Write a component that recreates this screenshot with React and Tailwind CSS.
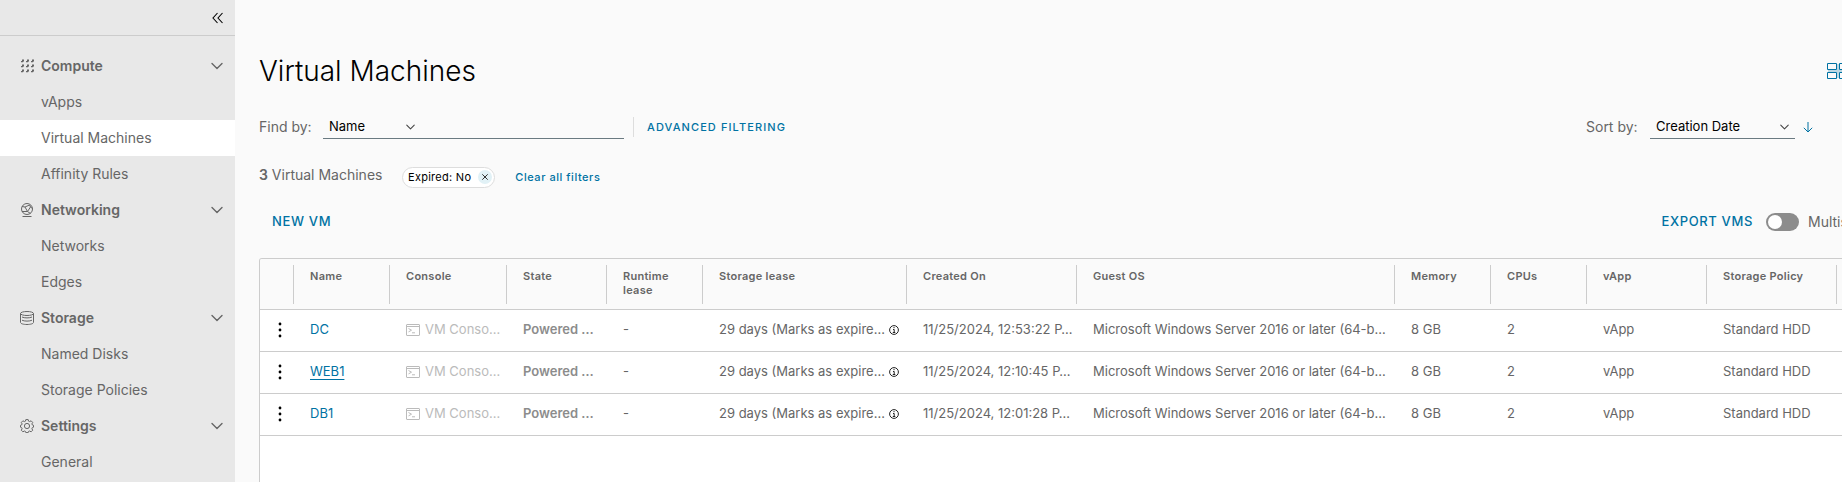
import React, { useState } from "react";

const navGroups = [
  { title: "Compute", icon: "grid", items: ["vApps", "Virtual Machines", "Affinity Rules"] },
  { title: "Networking", icon: "network", items: ["Networks", "Edges"] },
  { title: "Storage", icon: "storage", items: ["Named Disks", "Storage Policies"] },
  { title: "Settings", icon: "cog", items: ["General"] },
];

const columns = [
  { label: "Name", width: "w-[96px]" },
  { label: "Console", width: "w-[117px]" },
  { label: "State", width: "w-[100px]" },
  { label: "Runtime lease", width: "w-[96px]" },
  { label: "Storage lease", width: "w-[204px]" },
  { label: "Created On", width: "w-[170px]" },
  { label: "Guest OS", width: "w-[318px]" },
  { label: "Memory", width: "w-[96px]" },
  { label: "CPUs", width: "w-[96px]" },
  { label: "vApp", width: "w-[120px]" },
  { label: "Storage Policy", width: "w-[130px]" },
];

const machines = [
  { name: "DC", created: "11/25/2024, 12:53:22 P…" },
  { name: "WEB1", created: "11/25/2024, 12:10:45 P…" },
  { name: "DB1", created: "11/25/2024, 12:01:28 P…" },
];

const NavIcon = ({ name }) => {
  if (name === "grid") {
    return (
      <svg width="14" height="14" viewBox="0 0 14 14" fill="currentColor">
        {[0, 5, 10].map((y) =>
          [1, 6, 11].map((x) => <path key={`${x}-${y}`} d={`M${x + 1} ${y + 0.5}h2v1.500l-1 1.200h-2v-1.200h1z`} />)
        )}
      </svg>
    );
  }
  if (name === "network") {
    return (
      <svg width="14" height="14" viewBox="0 0 14 14" fill="none" stroke="currentColor" strokeWidth="1">
        <circle cx="7" cy="6" r="5.500" />
        <path d="M2 3.500 5 4l4.500-2M5 4l2.500 4.500L10.500 4 9.500 2M2 8.500l5.500 0 3 2M10.500 4l2 1.500" />
        <path d="M2.500 13.500h9" />
      </svg>
    );
  }
  if (name === "storage") {
    return (
      <svg width="14" height="14" viewBox="0 0 14 14" fill="none" stroke="currentColor" strokeWidth="1">
        <ellipse cx="7" cy="2.500" rx="6.500" ry="2" />
        <path d="M.5 2.500v9c0 1.100 2.900 2 6.500 2s6.500-.9 6.500-2v-9" />
        <path d="M2 6c1.200.6 3 .9 5 .9s3.800-.3 5-.9M2 9.200c1.200.6 3 .9 5 .9s3.800-.3 5-.9" />
      </svg>
    );
  }
  return (
    <svg width="14" height="14" viewBox="0 0 14 14" fill="none" stroke="currentColor" strokeWidth="1" strokeLinejoin="round">
      <circle cx="7" cy="7" r="2.600" />
      <path d="M5.800.6h2.400l.4 1.600 1 .4 1.500-.8 1.600 1.600-.8 1.500.4 1 1.200.4v1.900l-1.200.5-.4 1 .8 1.500-1.600 1.600-1.500-.8-1 .4-.4 1.200H5.800l-.4-1.200-1-.4-1.500.8-1.600-1.600.8-1.500-.4-1L.5 8.200V6.300l1.200-.4.4-1-.8-1.500 1.600-1.600 1.500.8 1-.4z" />
    </svg>
  );
};

const Chevron = ({ className }) => (
  <svg className={className} viewBox="0 0 12 8" fill="none" stroke="currentColor" strokeWidth="1.400" strokeLinecap="round" strokeLinejoin="round">
    <path d="M1 1.500 6 6.500l5-5" />
  </svg>
);

const Sidebar = () => (
  <aside className="w-[235px] shrink-0 bg-[#e8e8e8] text-[#666]">
    <div className="flex h-9 items-center justify-end border-b border-[#ccc] pr-3">
      <button type="button" aria-label="Collapse menu" className="text-black">
        <svg width="11" height="12" viewBox="0 0 11 12" fill="none" stroke="currentColor" strokeWidth="1.100">
          <path d="M5.500 1 1 6l4.500 5M10.500 1 6 6l4.500 5" />
        </svg>
      </button>
    </div>
    <nav className="pt-3 text-sm">
      {navGroups.map((group) => (
        <div key={group.title}>
          <button type="button" className="flex h-9 w-full items-center gap-[7px] pr-3 pl-5 font-semibold">
            <NavIcon name={group.icon} />
            <span className="flex-1 text-left">{group.title}</span>
            <Chevron className="h-2 w-3" />
          </button>
          {group.items.map((item) => (
            <a
              key={item}
              href="#"
              className={`flex h-9 items-center pl-[41px] ${item === "Virtual Machines" ? "bg-white" : ""}`}
            >
              {item}
            </a>
          ))}
        </div>
      ))}
    </nav>
  </aside>
);

const Toolbar = () => {
  const [query, setQuery] = useState("");

  return (
    <div className="flex h-6 items-center">
      <label htmlFor="find-by" className="mr-2 w-14 text-sm whitespace-nowrap">
        Find by:
      </label>
      <div className="flex h-6 w-[301px] border-b border-[#6a7a81]">
        <div className="relative flex w-[100px] items-center text-black">
          <select id="find-by" className="w-full appearance-none bg-transparent pl-[6px] text-[13px] outline-none">
            <option>Name</option>
          </select>
          <Chevron className="pointer-events-none absolute right-2 h-[6px] w-[9px] text-[#444]" />
        </div>
        <input
          type="text"
          aria-label="Search value"
          value={query}
          onChange={(e) => setQuery(e.target.value)}
          className="min-w-0 flex-1 bg-transparent px-1 text-[13px] text-black outline-none"
        />
      </div>
      <button type="button" className="ml-[9px] h-5 border-l border-[#ddd] pl-[13px] text-[11px] font-medium tracking-widest text-[#0072a3]">
        ADVANCED FILTERING
      </button>
      <label htmlFor="sort-by" className="mr-2 ml-auto w-14 text-sm whitespace-nowrap">
        Sort by:
      </label>
      <div className="relative flex h-6 w-[145px] items-center border-b border-[#6a7a81] text-black">
        <select id="sort-by" className="w-full appearance-none bg-transparent pl-[6px] text-[13px] outline-none">
          <option>Creation Date</option>
        </select>
        <Chevron className="pointer-events-none absolute right-[6px] h-[6px] w-[9px] text-[#444]" />
      </div>
      <button type="button" aria-label="Sort descending" className="mr-[68px] ml-2 text-[#0072a3]">
        <svg width="10" height="11" viewBox="0 0 10 11" fill="none" stroke="currentColor" strokeWidth="1">
          <path d="M5 0v10M.8 5.800 5 10l4.200-4.200" />
        </svg>
      </button>
    </div>
  );
};

const VmRow = ({ vm }) => (
  <tr className="h-[42px] border-b border-[#ccc] *:pb-[2px]">
    <td className="pl-[5px]">
      <button type="button" aria-label={`Actions for ${vm.name}`} className="flex w-[30px] justify-center text-black">
        <svg width="4" height="16" viewBox="0 0 4 16" fill="currentColor">
          <circle cx="2" cy="2" r="1.400" />
          <circle cx="2" cy="8" r="1.400" />
          <circle cx="2" cy="14" r="1.400" />
        </svg>
      </button>
    </td>
    <td className="pl-[17px]">
      <a href="#" className={`text-[#0072a3] ${vm.name === "WEB1" ? "underline underline-offset-3" : ""}`}>
        {vm.name}
      </a>
    </td>
    <td className="pl-[17px]">
      <button type="button" disabled className="flex items-center gap-[5px] whitespace-nowrap text-[#bbb]">
        <svg className="shrink-0" width="14" height="12" viewBox="0 0 14 12" fill="none" stroke="currentColor" strokeWidth="1">
          <rect x=".5" y=".5" width="13" height="11" rx=".5" />
          <path d="M.5 2.500h13M2.500 4.500l3 1.700-3 1.700M6 8.800h3" />
        </svg>
        VM Conso…
      </button>
    </td>
    <td className="pl-[17px] font-semibold whitespace-nowrap text-[#8c8c8c]">Powered …</td>
    <td className="pl-[17px]">-</td>
    <td className="pl-[17px]">
      <div className="flex items-center gap-1 whitespace-nowrap">
        29 days (Marks as expire…
        <svg className="shrink-0 text-[#222]" width="10" height="10" viewBox="0 0 10 10" fill="none" stroke="currentColor" strokeWidth="1">
          <circle cx="5" cy="5" r="4.400" />
          <path d="M5 2v1.200M4 4.500h1.200v3M3.800 7.500h2.500" />
        </svg>
      </div>
    </td>
    <td className="pl-[17px] whitespace-nowrap">{vm.created}</td>
    <td className="pl-[17px] whitespace-nowrap">Microsoft Windows Server 2016 or later (64-b…</td>
    <td className="pl-[17px]">8 GB</td>
    <td className="pl-[17px]">2</td>
    <td className="pl-[17px]">vApp</td>
    <td className="pl-[17px]">Standard HDD</td>
    <td />
  </tr>
);

const App = () => {
  const [multiselect, setMultiselect] = useState(false);

  return (
    <div className="flex min-h-screen bg-[#fafafa] font-['Inter','Open_Sans',sans-serif] text-[#666]">
      <Sidebar />
      <main className="flex min-w-0 flex-1 overflow-hidden pl-6">
        <div className="flex min-w-[1622px] flex-1 flex-col pt-[53px]">
          <div className="flex h-9 items-center justify-between">
            <h1 className="text-[28px] font-light text-black">Virtual Machines</h1>
            <button type="button" aria-label="Card view" className="mr-8 text-[#0072a3]">
              <svg width="22" height="16" viewBox="0 0 22 16" fill="none" stroke="currentColor" strokeWidth="1">
                <path d="M1 8h20M11 1v14" strokeWidth="2" opacity=".25" />
                <path fill="#fafafa" d="M.5.5h9v6h-9zM12.500.5h9v6h-9zM.5 9.500h9v6h-9zM12.500 9.500h9v6h-9z" />
              </svg>
            </button>
          </div>
          <div className="mt-[26px]">
            <Toolbar />
          </div>
          <div className="mt-[26px] flex h-6 items-center">
            <p className="w-[143px] self-start text-sm whitespace-nowrap">
              <strong className="font-semibold">3</strong> Virtual Machines
            </p>
            <span className="flex h-[21px] items-center gap-[7px] rounded-full border border-[#ddd] bg-white pr-[2px] pl-[5px] text-[11px] tracking-wide text-black">
              Expired: No
              <button type="button" aria-label="Remove filter" className="flex size-[14px] items-center justify-center rounded-full bg-[#e1f1f6]">
                <svg width="6" height="6" viewBox="0 0 6 6" stroke="#333" strokeWidth="1">
                  <path d="M.3.3l5.400 5.400M5.700.3.3 5.700" />
                </svg>
              </button>
            </span>
            <button type="button" className="ml-5 text-[11px] font-medium tracking-wider text-[#0072a3]">
              Clear all filters
            </button>
          </div>
          <div className="mt-[21px] flex h-6 items-center">
            <button type="button" className="ml-[13px] text-[13px] font-medium tracking-wider text-[#0072a3]">
              NEW VM
            </button>
            <button type="button" className="mr-[13px] ml-auto text-[13px] font-medium tracking-wider text-[#0072a3]">
              EXPORT VMS
            </button>
            <label className="flex w-[115px] items-center gap-[9px] text-sm">
              <input
                type="checkbox"
                role="switch"
                checked={multiselect}
                onChange={(e) => setMultiselect(e.target.checked)}
                className="h-[18px] w-[33px] shrink-0 appearance-none rounded-full bg-[#8c8c8c] p-[2px] before:block before:size-[14px] before:rounded-full before:bg-white checked:bg-[#0072a3] checked:before:ml-auto"
              />
              Multiselect
            </label>
          </div>
          <div className="mt-6 flex-1 overflow-hidden rounded-t-[3px] border border-b-0 border-[#ccc] bg-white">
            <table className="w-full table-fixed border-collapse text-[13px]">
              <thead className="bg-[#fafafa] text-left text-[11px] leading-[14px] tracking-wide">
                <tr className="border-b border-[#ccc]">
                  <th className="w-[33px]" aria-label="Actions" />
                  {columns.map((col) => (
                    <th key={col.label} className={`${col.width} px-0 pt-[6px] pb-[5px] font-semibold`}>
                      <div className="h-[39px] border-l border-[#ccc] pt-1 pr-6 pl-4">{col.label}</div>
                    </th>
                  ))}
                  <th className="px-0 pt-[6px] pb-[5px]" aria-label="More">
                    <div className="h-[39px] border-l border-[#ccc]" />
                  </th>
                </tr>
              </thead>
              <tbody>
                {machines.map((vm) => (
                  <VmRow key={vm.name} vm={vm} />
                ))}
              </tbody>
            </table>
          </div>
        </div>
      </main>
    </div>
  );
};

export default App;
